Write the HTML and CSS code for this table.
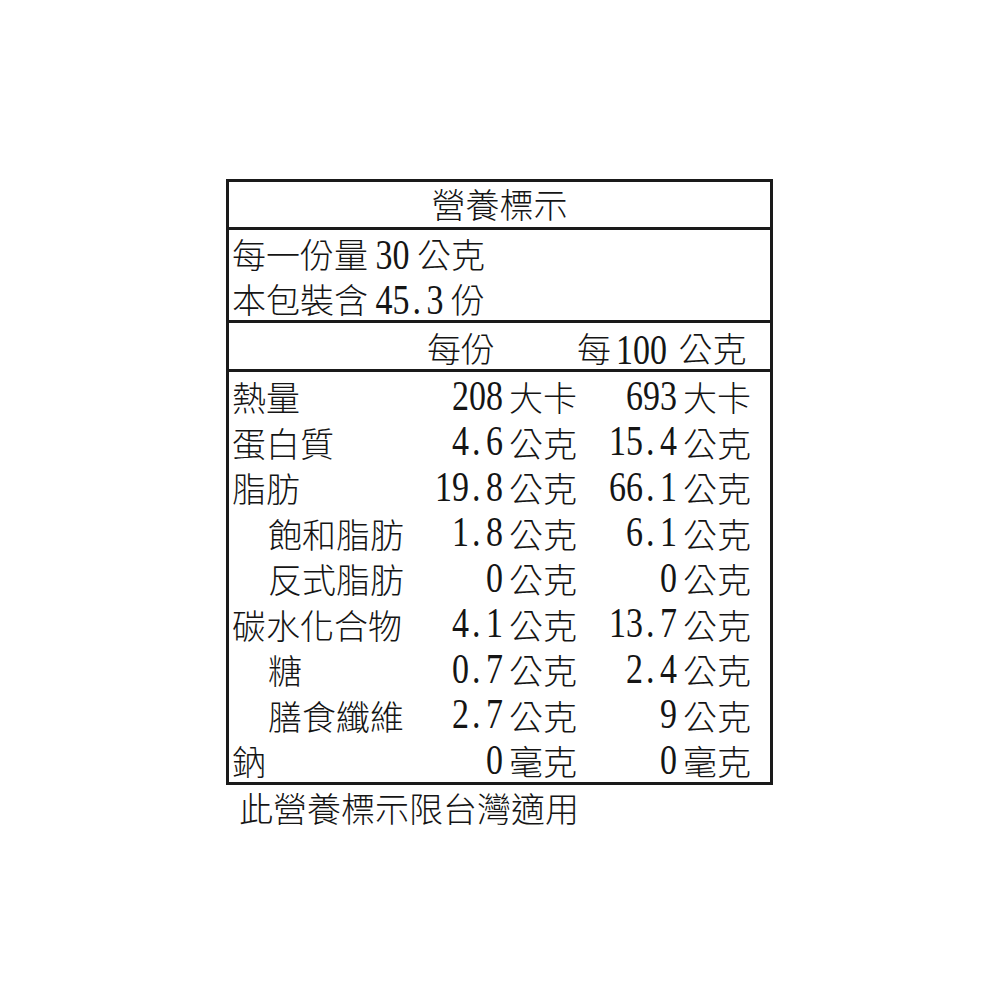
FILE: index.html
```html
<!DOCTYPE html>
<html lang="zh-Hant">
<head>
<meta charset="utf-8">
<title>營養標示</title>
<link rel="stylesheet" href="styles.css">
</head>
<body>
<div class="page">
  <div class="label">
    <div class="title">營養標示</div>
    <div class="serving">
      <div class="line">每一份量 <span class="num">30</span> 公克</div>
      <div class="line">本包裝含 <span class="num">45<span class="dot">.</span>3</span> 份</div>
    </div>
    <div class="row head">
      <div class="name"></div>
      <div class="h1">每份</div>
      <div class="h2">每<span class="num gap">100</span> 公克</div>
    </div>
    <div class="body">
      <div class="row">
        <div class="name">熱量</div>
        <div class="val"><span class="num">208</span><span class="unit">大卡</span></div>
        <div class="val"><span class="num">693</span><span class="unit">大卡</span></div>
      </div>
      <div class="row">
        <div class="name">蛋白質</div>
        <div class="val"><span class="num">4<span class="dot">.</span>6</span><span class="unit">公克</span></div>
        <div class="val"><span class="num">15<span class="dot">.</span>4</span><span class="unit">公克</span></div>
      </div>
      <div class="row">
        <div class="name">脂肪</div>
        <div class="val"><span class="num">19<span class="dot">.</span>8</span><span class="unit">公克</span></div>
        <div class="val"><span class="num">66<span class="dot">.</span>1</span><span class="unit">公克</span></div>
      </div>
      <div class="row">
        <div class="name sub">飽和脂肪</div>
        <div class="val"><span class="num">1<span class="dot">.</span>8</span><span class="unit">公克</span></div>
        <div class="val"><span class="num">6<span class="dot">.</span>1</span><span class="unit">公克</span></div>
      </div>
      <div class="row">
        <div class="name sub">反式脂肪</div>
        <div class="val"><span class="num">0</span><span class="unit">公克</span></div>
        <div class="val"><span class="num">0</span><span class="unit">公克</span></div>
      </div>
      <div class="row">
        <div class="name">碳水化合物</div>
        <div class="val"><span class="num">4<span class="dot">.</span>1</span><span class="unit">公克</span></div>
        <div class="val"><span class="num">13<span class="dot">.</span>7</span><span class="unit">公克</span></div>
      </div>
      <div class="row">
        <div class="name sub">糖</div>
        <div class="val"><span class="num">0<span class="dot">.</span>7</span><span class="unit">公克</span></div>
        <div class="val"><span class="num">2<span class="dot">.</span>4</span><span class="unit">公克</span></div>
      </div>
      <div class="row">
        <div class="name sub">膳食纖維</div>
        <div class="val"><span class="num">2<span class="dot">.</span>7</span><span class="unit">公克</span></div>
        <div class="val"><span class="num">9</span><span class="unit">公克</span></div>
      </div>
      <div class="row">
        <div class="name">鈉</div>
        <div class="val"><span class="num">0</span><span class="unit">毫克</span></div>
        <div class="val"><span class="num">0</span><span class="unit">毫克</span></div>
      </div>
    </div>
  </div>
  <div class="note">此營養標示限台灣適用</div>
</div>
</body>
</html>
```

FILE: styles.css
```css
html, body {
  margin: 0;
  padding: 0;
  background: #ffffff;
}

body {
  font-family: "Noto Sans CJK TC", "Noto Sans CJK SC", sans-serif;
  font-size: 34px;
  font-weight: 300;
  color: #151515;
}

.page {
  padding: 179px 0 0 226px;
}

.label {
  width: 547px;
  box-sizing: border-box;
  border: 3px solid #1a1a1a;
}

.title {
  height: 45px;
  line-height: 43px;
  text-align: center;
  border-bottom: 3px solid #1a1a1a;
}

.serving {
  border-bottom: 3px solid #1a1a1a;
  padding-left: 3px;
}

.line {
  height: 45px;
  line-height: 47px;
  white-space: nowrap;
}

.num {
  display: inline-block;
  font-family: "Liberation Serif", serif;
  font-size: 34px;
  font-weight: 400;
  transform: scaleY(1.24);
  transform-origin: 50% 62%;
}

.num.gap {
  margin-left: 5px;
  margin-right: 4px;
}

.dot {
  display: inline-block;
  width: 17px;
  padding-left: 3px;
  box-sizing: border-box;
  text-align: left;
}

.row {
  display: grid;
  grid-template-columns: 1fr 171px 174px;
  padding-right: 19px;
  height: 45.5px;
  align-items: center;
  white-space: nowrap;
}

.head {
  height: 46px;
  border-bottom: 3px solid #1a1a1a;
}

.h1 {
  text-align: right;
  padding-right: 82px;
}

.h2 {
  text-align: right;
  padding-right: 11px;
}

.name {
  padding-left: 3px;
}

.name.sub {
  padding-left: 39px;
}

.val {
  display: flex;
  justify-content: flex-end;
  align-items: center;
  gap: 6px;
}

.unit {
  display: inline-block;
}

.note {
  padding-left: 13px;
  height: 44px;
  line-height: 46px;
}
```
